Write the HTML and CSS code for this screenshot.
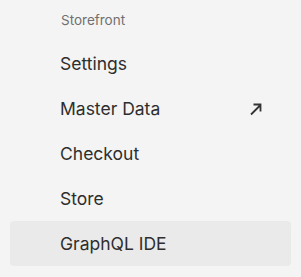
FILE: index.html
```html
<!DOCTYPE html>
<html lang="en">

<head>
  <meta charset="UTF-8">
  <meta name="viewport" content="width=device-width, initial-scale=1.0">
  <title>Storefront</title>
  <link rel="stylesheet" href="styles.css">
</head>

<body>
  <div id="sidebar">
    <h4 class="group-title">Storefront</h4>
    <ul class="menu">
      <li class="menu-item">Settings</li>
      <li class="menu-item">
        <span>Master Data</span>
        <!-- external link arrow -->
        <svg class="ext-icon" width="16" height="16" viewBox="0 0 16 16">
          <path d="M3 13.5 L12.5 4 M5.5 3.5 H12.5 V10.5" fill="none" stroke="#333" stroke-width="1.8"/>
        </svg>
      </li>
      <li class="menu-item">Checkout</li>
      <li class="menu-item">Store</li>
      <li class="menu-item menu-selected">GraphQL IDE</li>
    </ul>
  </div>
</body>

</html>
```

FILE: styles.css
```css
* {
  margin: 0;
  padding: 0;
}

body {
  background-color: #f4f4f4;
  font-family: Inter, "Noto Sans", sans-serif;
}

li {
  list-style: none;
}

#sidebar {
  padding: 10px 10px 0;
}

.group-title {
  font-size: 13.5px;
  font-weight: 400;
  line-height: 20px;
  color: #707070;
  padding-left: 51px;
  margin-bottom: 11px;
}

.menu-item {
  display: flex;
  align-items: center;
  justify-content: space-between;
  height: 45px;
  padding: 0 27px 0 50px;
  font-size: 17.5px;
  color: #2e2e2e;
  border-radius: 4px;
}

.menu-selected {
  background-color: #eaeaea;
}

.ext-icon {
  display: block;
}
```
